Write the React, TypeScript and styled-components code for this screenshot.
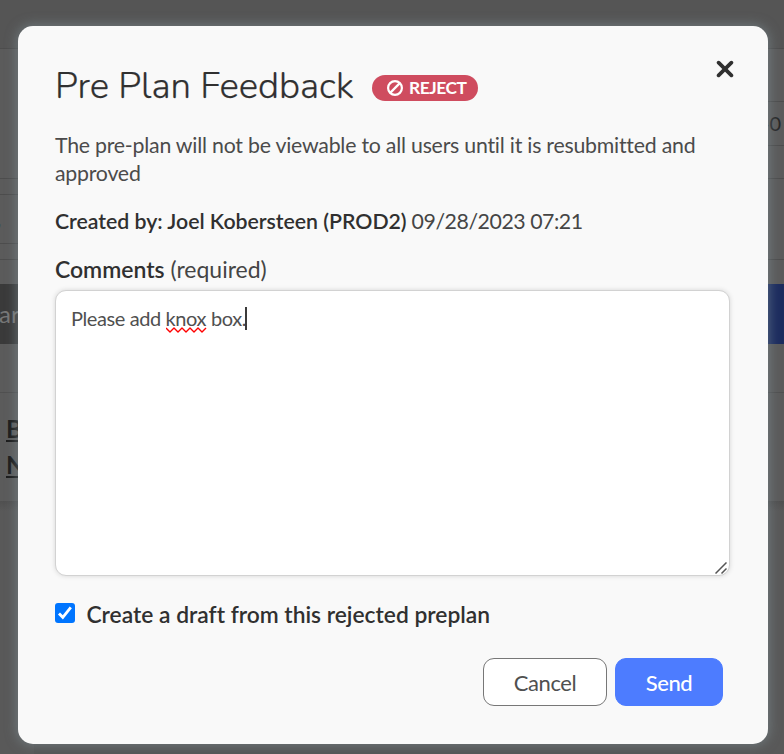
import React from "react";
import styled, { createGlobalStyle } from "styled-components";

const GlobalStyle = createGlobalStyle`
  *, *::before, *::after { box-sizing: border-box; }
  body { margin: 0; background: #595959; overflow: hidden; }
  button { font: inherit; letter-spacing: inherit; cursor: pointer; }
  p, h1 { margin: 0; }
`;

const Screen = styled.div`
  position: relative;
  width: 784px;
  height: 754px;
  overflow: hidden;
  font-family: Lato, "Open Sans", sans-serif;
  font-variant-ligatures: none;
  color: #454545;
`;

const Backdrop = styled.div`
  display: flex;
  justify-content: space-between;
  height: 754px;
  background: #555;
`;

const Gutter = styled.div`
  width: 34px;
  overflow: hidden;
`;

const Band = styled.div<{ $height: number; $fill?: string; $line?: string }>`
  display: flex;
  align-items: center;
  height: ${(p) => p.$height}px;
  background: ${(p) => p.$fill ?? "#5b5b5b"};
  border-bottom: ${(p) => (p.$line ? `1px solid ${p.$line}` : "0")};
  white-space: nowrap;
`;

const Shade = styled.div`
  height: 253px;
  background: linear-gradient(#505050, #595959 10px);
`;

const BandText = styled.span<{ $color: string; $size: number; $shift?: number }>`
  margin-left: ${(p) => p.$shift ?? 0}px;
  padding-bottom: 2px;
  color: ${(p) => p.$color};
  font-size: ${(p) => p.$size}px;
`;

const BackLinks = styled.div`
  height: 108px;
  padding: 17px 0 0 6px;
  background: #5b5b5b;
  color: #1b1b1b;
  font-size: 25px;
  font-weight: 700;
  line-height: 36px;
  text-decoration: underline;
  text-decoration-thickness: 2px;
  text-underline-offset: 2px;
  white-space: nowrap;
`;

const Dialog = styled.section`
  position: absolute;
  top: 26px;
  left: 18px;
  width: 750px;
  height: 718px;
  padding: 37px 38px 0 37px;
  border-radius: 15px;
  background: #f9f9f9;
  box-shadow: 0 0 12px 1px rgba(133, 151, 158, 0.55);
`;

const Header = styled.header`
  display: flex;
  align-items: flex-start;
  height: 68px;
`;

const Title = styled.h1`
  width: 317px;
  font-family: "Nunito", "Open Sans", sans-serif;
  font-size: 36.6px;
  font-weight: 300;
  line-height: 46px;
  color: #303030;
  -webkit-text-stroke: 0.25px #303030;
  white-space: nowrap;
`;

const Badge = styled.span`
  display: flex;
  align-items: center;
  gap: 6px;
  width: 106px;
  height: 26px;
  margin-top: 12px;
  padding-left: 15px;
  border-radius: 13px;
  background: #cf4c5f;
  color: #fff;
  font-size: 17.4px;
  font-weight: 700;
  line-height: 26px;
  letter-spacing: -0.5px;
`;

const CloseButton = styled.button`
  display: flex;
  margin: -3px -4px 0 auto;
  padding: 0;
  border: 0;
  background: none;
`;

const Notice = styled.p`
  height: 76px;
  font-size: 21.3px;
  line-height: 28px;
  letter-spacing: -0.23px;
  color: #4b4b4b;
`;

const Meta = styled.p`
  height: 48px;
  font-size: 21.3px;
  line-height: 28px;
  letter-spacing: -0.45px;
`;

const Strong = styled.strong`
  font-weight: 600;
  letter-spacing: -0.03px;
  color: #303030;
`;

const Label = styled.p`
  height: 35px;
  font-size: 23px;
  line-height: 28px;
`;

const CommentBox = styled.div`
  position: relative;
  height: 286px;
  padding: 13px 15px;
  border: 1px solid #d2d2d2;
  border-radius: 11px;
  background: #fff;
  box-shadow: 0 0 5px rgba(0, 0, 0, 0.14);
  color: #505050;
  font-size: 20px;
  line-height: 28px;
  letter-spacing: -0.4px;
`;

const Misspelled = styled.span`
  position: relative;
`;

const Squiggle = styled.svg`
  position: absolute;
  left: 0;
  bottom: -3px;
`;

const Caret = styled.span`
  display: inline-block;
  width: 2px;
  height: 23px;
  margin-left: -1.5px;
  vertical-align: -4px;
  background: #3b3b3b;
`;

const ResizeGrip = styled.svg`
  position: absolute;
  right: 2px;
  bottom: 1px;
`;

const DraftOption = styled.div`
  display: flex;
  align-items: center;
  gap: 11.5px;
  height: 28px;
  margin-top: 24px;
  color: #303030;
  font-size: 22.8px;
  font-weight: 600;
  line-height: 28px;
  white-space: nowrap;
`;

const CheckMark = styled.svg`
  flex: none;
  margin-bottom: 2px;
`;

const Actions = styled.footer`
  display: flex;
  justify-content: flex-end;
  gap: 8px;
  margin: 30px 7px 0 0;
`;

const ActionButton = styled.button<{ $primary?: boolean }>`
  width: ${(p) => (p.$primary ? 108 : 124)}px;
  height: 48px;
  padding: 1px 0 0;
  border: 1px solid ${(p) => (p.$primary ? "#4d7cff" : "#777")};
  border-radius: 11px;
  background: ${(p) => (p.$primary ? "#4d7cff" : "#fff")};
  color: ${(p) => (p.$primary ? "#fff" : "#505050")};
  font-size: 22px;
  font-weight: ${(p) => (p.$primary ? 500 : 400)};
  letter-spacing: -0.45px;
`;

const line = "#4d4d4d";

export default function App() {
  return (
    <>
      <GlobalStyle />
      <Screen>
        <Backdrop aria-hidden="true">
          <Gutter>
            <Band $height={49} $fill="#555" $line={line} />
            <Band $height={130} $line={line} />
            <Band $height={16} $line={line} />
            <Band $height={49} $line={line}>
              <BandText $color="#42545c" $size={20} $shift={-3}>,</BandText>
            </Band>
            <Band $height={16} $line={line} />
            <Band $height={24} />
            <Band $height={60} $fill="#3a3a3a">
              <BandText $color="#777" $size={24} $shift={-1}>ar</BandText>
            </Band>
            <Band $height={49} $line="#505050" />
            <BackLinks>B<br />N</BackLinks>
            <Shade />
          </Gutter>
          <Gutter>
            <Band $height={49} $fill="#555" $line={line} />
            <Band $height={53} $line={line} />
            <Band $height={44} $line={line}>
              <BandText $color="#272727" $size={20} $shift={12}>-0</BandText>
            </Band>
            <Band $height={33} $line={line} />
            <Band $height={81} $line={line} />
            <Band $height={24} />
            <Band $height={60} $fill="#1c2c5e" />
            <Band $height={49} $line="#505050" />
            <Band $height={108} />
            <Shade />
          </Gutter>
        </Backdrop>

        <Dialog role="dialog" aria-label="Pre Plan Feedback">
          <Header>
            <Title>Pre Plan Feedback</Title>
            <Badge>
              <svg width="16" height="16" viewBox="0 0 16 16" fill="none" stroke="#fff" strokeWidth="2.2">
                <circle cx="8" cy="8" r="6.9" />
                <path d="M3.4 12.6 12.6 3.4" />
              </svg>
              REJECT
            </Badge>
            <CloseButton aria-label="Close">
              <svg width="18" height="18" viewBox="0 0 18 18" fill="none" stroke="#303030" strokeWidth="3.7" strokeLinecap="round">
                <path d="M2.6 2.6 15.4 15.4M15.4 2.6 2.6 15.4" />
              </svg>
            </CloseButton>
          </Header>
          <Notice>The pre-plan will not be viewable to all users until it is resubmitted and approved</Notice>
          <Meta><Strong>Created by: Joel Kobersteen (PROD2)</Strong> 09/28/2023 07:21</Meta>
          <Label><Strong>Comments</Strong> (required)</Label>
          <CommentBox role="textbox">
            Please add{" "}
            <Misspelled>
              knox
              <Squiggle width="41" height="6" viewBox="0 0 41 6" fill="none" stroke="#f00" strokeWidth="1.4">
                <path d="M0 1 4 5 8 1 12 5 16 1 20 5 24 1 28 5 32 1 36 5 40 1" strokeLinejoin="round" />
              </Squiggle>
            </Misspelled>{" "}
            box.<Caret />
            <ResizeGrip width="12" height="12" viewBox="0 0 12 12" stroke="#555" strokeWidth="1.5">
              <path d="M.5 11.5 11.5.5M6.5 11.5 11.5 6.5" />
            </ResizeGrip>
          </CommentBox>
          <DraftOption role="checkbox" aria-checked="true">
            <CheckMark width="20" height="20" viewBox="0 0 20 20">
              <rect width="20" height="20" rx="3" fill="#0075ff" />
              <path d="M4 10.4 7.8 14.3 15.8 4.3" fill="none" stroke="#fff" strokeWidth="2.8" />
            </CheckMark>
            Create a draft from this rejected preplan
          </DraftOption>
          <Actions>
            <ActionButton>Cancel</ActionButton>
            <ActionButton $primary>Send</ActionButton>
          </Actions>
        </Dialog>
      </Screen>
    </>
  );
}
